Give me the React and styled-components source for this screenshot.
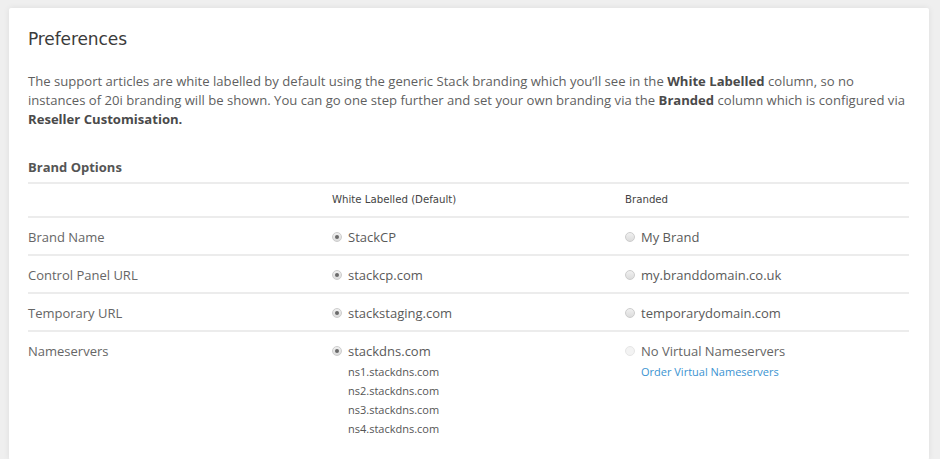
import React from "react";
import styled, { createGlobalStyle } from "styled-components";

const Global = createGlobalStyle`
  html, body { margin: 0; padding: 0; background: #efefef; }
  body { font-family: "Open Sans", "Liberation Sans", sans-serif; }
  * { box-sizing: border-box; }
`;

const Page = styled.div`
  padding: 8px 11px 0 9px;
`;

const Card = styled.section`
  background: #fff;
  border-radius: 2px;
  box-shadow: 0 0 6px rgba(0, 0, 0, 0.08);
  padding: 20px 20px 14px 19px;
`;

const Title = styled.h1`
  margin: 0;
  font-family: "DejaVu Sans", "Liberation Sans", sans-serif;
  font-weight: 400;
  font-size: 17px;
  line-height: 22px;
  color: #3b3b3b;
  letter-spacing: -0.1px;
`;

const Intro = styled.p`
  margin: 22px 0 0;
  font-size: 13.1px;
  line-height: 19px;
  color: #5f5f5f;
  b { color: #4a4a4a; font-weight: 700; }
`;

const SectionTitle = styled.h2`
  margin: 29px 0 0;
  font-size: 13px;
  line-height: 19px;
  font-weight: 700;
  color: #555;
  padding-bottom: 5px;
  border-bottom: 2px solid #ececec;
`;

const Row = styled.div`
  display: grid;
  grid-template-columns: 304px 293px 1fr;
  align-items: start;
  min-height: ${(p) => (p.$head ? "34px" : "38px")};
  padding: ${(p) => (p.$head ? "8px 0 0" : "10px 0 8px")};
  border-bottom: ${(p) => (p.$last ? "none" : "2px solid #ececec")};
`;

const HeadCell = styled.div`
  font-family: "DejaVu Sans", "Liberation Sans", sans-serif;
  font-size: 10.2px;
  line-height: 16px;
  color: #444;
`;

const Label = styled.div`
  font-size: 13px;
  line-height: 18px;
  color: #666;
`;

const Option = styled.div`
  display: flex;
  flex-direction: column;
`;

const OptionMain = styled.div`
  display: flex;
  align-items: center;
  gap: 6px;
  font-size: 13px;
  line-height: 18px;
  color: ${(p) => (p.$dim ? "#666" : "#5a5a5a")};
`;

const Radio = styled.span`
  width: 10px;
  height: 10px;
  border-radius: 50%;
  flex: none;
  background: ${(p) => (p.$faint ? "#f3f3f3" : "linear-gradient(#f0f0f0, #dcdcdc)")};
  border: 1px solid ${(p) => (p.$faint ? "#e6e6e6" : "#cdcdcd")};
  display: flex;
  align-items: center;
  justify-content: center;
  &::after {
    content: "";
    width: 4px;
    height: 4px;
    border-radius: 50%;
    background: #6a6a6a;
    display: ${(p) => (p.$checked ? "block" : "none")};
  }
`;

const SubList = styled.div`
  padding-left: 16px;
  margin-top: 2px;
`;

const SubItem = styled.div`
  font-size: 11px;
  line-height: 19px;
  color: #555;
`;

const Link = styled.a`
  font-size: 11px;
  line-height: 19px;
  color: #3b93d1;
  text-decoration: none;
  padding-left: 16px;
  margin-top: 2px;
`;

const rows = [
  ["Brand Name", "StackCP", "My Brand"],
  ["Control Panel URL", "stackcp.com", "my.branddomain.co.uk"],
  ["Temporary URL", "stackstaging.com", "temporarydomain.com"],
];

export default function App() {
  return (
    <>
      <Global />
      <Page>
        <Card>
          <Title>Preferences</Title>
          <Intro>
            The support articles are white labelled by default using the generic Stack branding which you’ll see in the{" "}
            <b>White Labelled</b> column, so no instances of 20i branding will be shown. You can go one step further and
            set your own branding via the <b>Branded</b> column which is configured via <b>Reseller Customisation.</b>
          </Intro>
          <SectionTitle>Brand Options</SectionTitle>
          <Row $head>
            <div />
            <HeadCell>White Labelled (Default)</HeadCell>
            <HeadCell>Branded</HeadCell>
          </Row>
          {rows.map(([label, a, b]) => (
            <Row key={label}>
              <Label>{label}</Label>
              <Option>
                <OptionMain>
                  <Radio $checked />
                  {a}
                </OptionMain>
              </Option>
              <Option>
                <OptionMain>
                  <Radio />
                  {b}
                </OptionMain>
              </Option>
            </Row>
          ))}
          <Row $last>
            <Label>Nameservers</Label>
            <Option>
              <OptionMain>
                <Radio $checked />
                stackdns.com
              </OptionMain>
              <SubList>
                {["ns1", "ns2", "ns3", "ns4"].map((n) => (
                  <SubItem key={n}>{n}.stackdns.com</SubItem>
                ))}
              </SubList>
            </Option>
            <Option>
              <OptionMain $dim>
                <Radio $faint />
                No Virtual Nameservers
              </OptionMain>
              <Link href="#">Order Virtual Nameservers</Link>
            </Option>
          </Row>
        </Card>
      </Page>
    </>
  );
}
